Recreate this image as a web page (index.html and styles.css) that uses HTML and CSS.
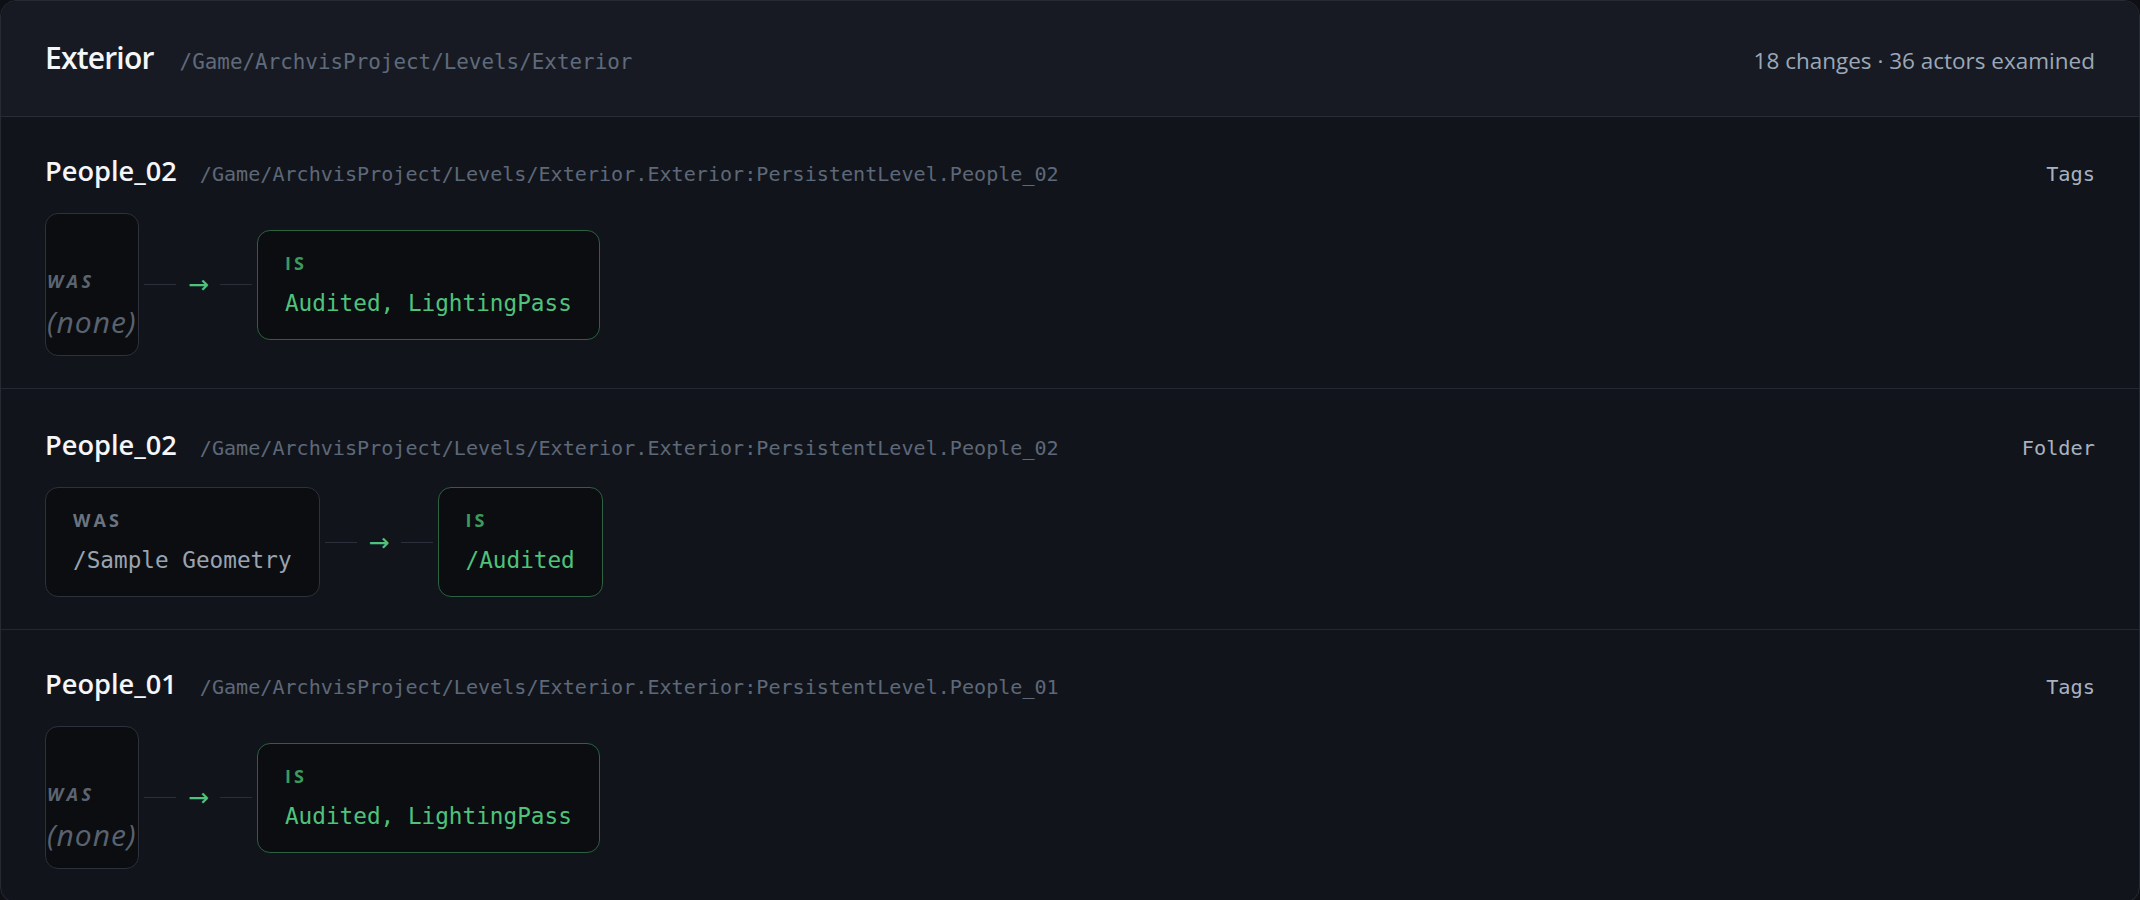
FILE: index.html
```html
<!DOCTYPE html>
<html lang="en">
<head>
  <meta charset="UTF-8" />
  <meta name="viewport" content="width=device-width, initial-scale=1.0"/>
  <title>Level Changes</title>
  <link rel="stylesheet" href="styles.css">
</head>
<body>
  <div class="report">
    <header class="report-head">
      <div class="title-line">
        <h1>Exterior</h1>
        <span class="path">/Game/ArchvisProject/Levels/Exterior</span>
      </div>
      <div class="summary">18 changes · 36 actors examined</div>
    </header>

    <section class="change">
      <div class="change-head">
        <h2>People_02</h2>
        <span class="path">/Game/ArchvisProject/Levels/Exterior.Exterior:PersistentLevel.People_02</span>
        <span class="prop">Tags</span>
      </div>
      <div class="diff">
        <div class="side was empty">
          <div class="side-label">WAS</div>
          <div class="side-value">(none)</div>
        </div>
        <div class="link"><span class="wire"></span><span class="arrow">→</span><span class="wire"></span></div>
        <div class="side is">
          <div class="side-label">IS</div>
          <div class="side-value">Audited, LightingPass</div>
        </div>
      </div>
    </section>

    <section class="change">
      <div class="change-head">
        <h2>People_02</h2>
        <span class="path">/Game/ArchvisProject/Levels/Exterior.Exterior:PersistentLevel.People_02</span>
        <span class="prop">Folder</span>
      </div>
      <div class="diff">
        <div class="side was">
          <div class="side-label">WAS</div>
          <div class="side-value">/Sample Geometry</div>
        </div>
        <div class="link"><span class="wire"></span><span class="arrow">→</span><span class="wire"></span></div>
        <div class="side is">
          <div class="side-label">IS</div>
          <div class="side-value">/Audited</div>
        </div>
      </div>
    </section>

    <section class="change">
      <div class="change-head">
        <h2>People_01</h2>
        <span class="path">/Game/ArchvisProject/Levels/Exterior.Exterior:PersistentLevel.People_01</span>
        <span class="prop">Tags</span>
      </div>
      <div class="diff">
        <div class="side was empty">
          <div class="side-label">WAS</div>
          <div class="side-value">(none)</div>
        </div>
        <div class="link"><span class="wire"></span><span class="arrow">→</span><span class="wire"></span></div>
        <div class="side is">
          <div class="side-label">IS</div>
          <div class="side-value">Audited, LightingPass</div>
        </div>
      </div>
    </section>
  </div>
</body>
</html>
```

FILE: styles.css
```css
body {
  margin: 0;
  background-color: #0e1015;
  font-family: "Open Sans", "Noto Sans", sans-serif;
  color: #e6e9ee;
}
.report {
  background-color: #12141b;
  border: 1px solid #262a33;
  border-radius: 16px;
  overflow: hidden;
}
.report-head {
  display: flex;
  align-items: baseline;
  justify-content: space-between;
  padding: 39px 44px 40px 44px;
  background-color: #171a22;
  border-bottom: 1px solid #282c36;
}
.title-line {
  display: flex;
  align-items: baseline;
  gap: 26px;
}
h1 {
  margin: 0;
  font-size: 30px;
  line-height: 36px;
  font-weight: 600;
  letter-spacing: -0.8px;
  color: #f4f6f9;
}
.path {
  font-family: "DejaVu Sans Mono", monospace;
  font-size: 20.1px;
  color: #5d6878;
}
.report-head .path {
  font-size: 20.9px;
  color: #5f6a7b;
}
.summary {
  font-size: 22.5px;
  color: #9ba8b9;
}

.change {
  padding: 36px 44px 32px 44px;
  border-bottom: 1px solid #242833;
}
.change:nth-child(3) {
  padding-top: 38px;
}
.change-head {
  display: flex;
  align-items: baseline;
  gap: 23px;
  margin-bottom: 24px;
}
h2 {
  margin: 0;
  font-size: 27.2px;
  line-height: 36px;
  font-weight: 600;
  color: #f4f6f9;
}
.prop {
  margin-left: auto;
  font-family: "DejaVu Sans Mono", monospace;
  font-size: 20.3px;
  color: #a7b2c1;
}

.diff {
  display: flex;
  align-items: center;
}
.side {
  display: flex;
  flex-direction: column;
  gap: 12px;
  padding: 20px 27px;
  background-color: #0b0d11;
  border: 1px solid #2c313b;
  border-radius: 13px;
}
.side-label {
  font-size: 18px;
  line-height: 24px;
  font-weight: 700;
  letter-spacing: 0.17em;
  color: #6b7380;
}
.side-value {
  font-family: "DejaVu Sans Mono", monospace;
  font-size: 22.7px;
  line-height: 32px;
  color: #9aa3b0;
}
.side.is {
  border-color: #2c6141;
}
.side.is .side-label {
  color: #3c9a5d;
}
.side.is .side-value {
  color: #4fc27b;
}

/* nothing before: a narrow box with the placeholder in italics */
.side.empty {
  box-sizing: border-box;
  width: 94px;
  height: 143px;
  padding: 0 1px 14px 1px;
  justify-content: flex-end;
  gap: 10px;
  font-style: italic;
}
.side.empty .side-label {
  letter-spacing: 0.2em;
  color: #5c6471;
}
.side.empty .side-value {
  font-family: "Open Sans", sans-serif;
  font-size: 30px;
  line-height: 38px;
  letter-spacing: 1px;
  white-space: nowrap;
  color: #5a626f;
}

.link {
  display: flex;
  align-items: center;
  padding: 0 5px;
}
.wire {
  width: 32px;
  height: 1px;
  background-color: #2a2f3a;
}
.arrow {
  margin: 0 11px 0 12px;
  font-family: "DejaVu Sans", sans-serif;
  font-size: 25px;
  line-height: 1;
  color: #4fc27b;
}
```
